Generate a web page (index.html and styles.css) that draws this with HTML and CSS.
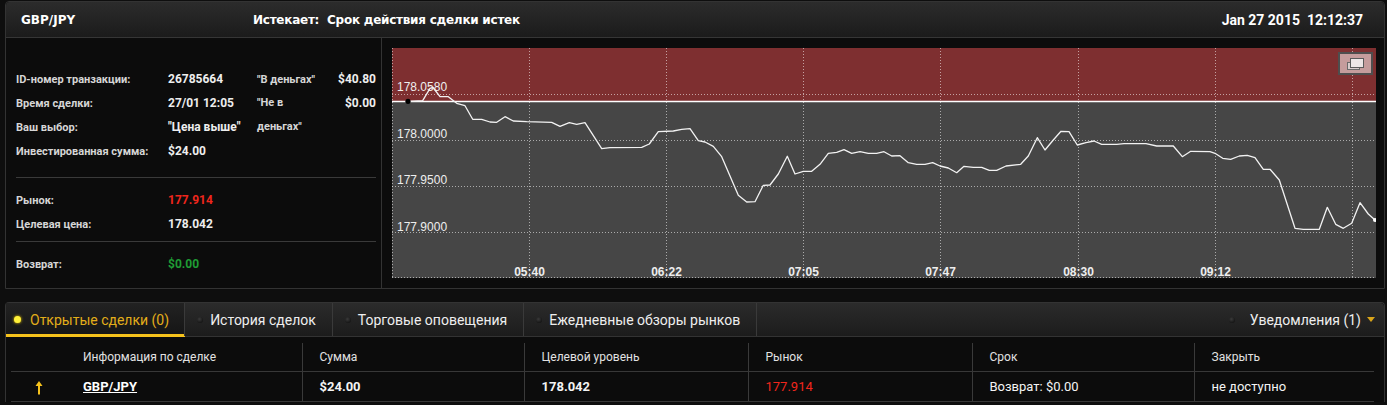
FILE: index.html
```html
<!DOCTYPE html>
<html>
<head>
  <title>GBP/JPY</title>
  <link rel="stylesheet" href="styles.css">
</head>
<body>
  <section class="deal">
    <header class="deal-head">
      <span class="deal-pair">GBP/JPY</span>
      <span class="deal-expiry">Истекает:&nbsp; Срок действия сделки истек</span>
      <span class="deal-date">Jan 27 2015&nbsp; 12:12:37</span>
    </header>
    <div class="deal-body">
      <div class="info">
        <div class="info-grid">
          <span class="label">ID-номер транзакции:</span>
          <span class="value">26785664</span>
          <span class="note">"В деньгах"</span>
          <span class="sum">$40.80</span>

          <span class="label">Время сделки:</span>
          <span class="value">27/01 12:05</span>
          <span class="note note-wrap">"Не в деньгах"</span>
          <span class="sum">$0.00</span>

          <span class="label">Ваш выбор:</span>
          <span class="value">"Цена выше"</span>
          <span></span>

          <span class="label">Инвестированная сумма:</span>
          <span class="value">$24.00</span>
        </div>
        <div class="info-grid info-split">
          <span class="label">Рынок:</span>
          <span class="value red">177.914</span>
          <span class="label">Целевая цена:</span>
          <span class="value">178.042</span>
        </div>
        <div class="info-grid info-split">
          <span class="label">Возврат:</span>
          <span class="value green">$0.00</span>
        </div>
      </div>
      <div class="chart-wrap">
        <svg class="chart" width="984" height="230" viewBox="0 0 984 230">
          <rect x="0" y="0" width="984" height="53" fill="#7e2f30"/>
          <rect x="0" y="53" width="984" height="177" fill="#464646"/>
          <g stroke="rgba(255,255,255,0.55)" stroke-width="1" stroke-dasharray="1 2">
            <line x1="0" y1="46.5" x2="984" y2="46.5"/>
            <line x1="0" y1="92.5" x2="984" y2="92.5"/>
            <line x1="0" y1="138.5" x2="984" y2="138.5"/>
            <line x1="0" y1="184.5" x2="984" y2="184.5"/>
            <line x1="0" y1="229.5" x2="984" y2="229.5"/>
            <line x1="0.5" y1="0" x2="0.5" y2="230"/>
            <line x1="137.5" y1="0" x2="137.5" y2="230"/>
            <line x1="274.5" y1="0" x2="274.5" y2="230"/>
            <line x1="411.5" y1="0" x2="411.5" y2="230"/>
            <line x1="548.5" y1="0" x2="548.5" y2="230"/>
            <line x1="686.5" y1="0" x2="686.5" y2="230"/>
            <line x1="823.5" y1="0" x2="823.5" y2="230"/>
            <line x1="960.5" y1="0" x2="960.5" y2="230"/>
          </g>
          <g class="axis-y">
            <text x="5" y="43">178.0580</text>
            <text x="5" y="89.5">178.0000</text>
            <text x="5" y="136">177.9500</text>
            <text x="5" y="182.5">177.9000</text>
          </g>
          <line x1="0" y1="53.5" x2="984" y2="53.5" stroke="#fff" stroke-width="1.5"/>
          <polyline fill="none" stroke="#f2f2f2" stroke-width="1.3" stroke-linejoin="round"
            points="16,53.3 30.7,52.7 38,40.3 41,39.5 48,48.7 56.3,48.7 64.7,55.3 73,57.7 80.7,71.3 89.7,71.3 98,74 104.7,74.3 113,68.7 121.3,73 134.7,73.7 159.7,74.3 168,78.3 177.3,74.7 184.7,76.3 193,74.7 209.7,100.7 218,99.7 249.7,99.3 257.3,96 266.3,83.7 281.3,83 289.7,81.3 298,80.7 306.3,92.7 313,94 321.3,98.3 329.7,108.7 346.3,147.3 354.7,154 363,153.7 371.3,137.3 378,137 386.3,126 395.3,108.3 403,126 411.3,123.3 419.7,123.3 428,116.3 436.3,105.3 444.7,104.3 452,101.7 459.7,105.3 468,103.7 476.3,105.3 484.7,105.3 492,103.7 499.7,108 508,107.7 516.3,114.7 524.7,116.3 533,116.3 540.7,114.7 548,118 556.3,120 564.7,124.7 572,118.3 581.3,119.3 589.7,119.3 597.3,122.3 604.7,122.3 614,118 628.7,116.3 636.3,108 645.3,89.7 653,102 661.3,92 669,83.3 677,83.7 685.3,97 694,94.7 702,93 709.7,96.3 724.7,96.3 732,95.7 754,95.7 764.7,98 781.3,98 790.3,108.7 798.7,103.3 818,103.7 823,105.3 830.7,110.3 838.7,111.3 847.3,108 855.3,107.3 863,109.7 871.3,121.3 878,121.3 887.3,132 903,180.3 911.3,181.3 927.3,181.3 935.3,159.3 943.7,176.3 951.3,180.3 959.7,175.3 968,154.7 976.3,166 983,172"/>
          <circle cx="16" cy="53.3" r="2.6" fill="#000"/>
          <circle cx="983" cy="172" r="2" fill="#fff"/>
          <g class="axis-x">
            <text x="137.5" y="228">05:40</text>
            <text x="274.5" y="228">06:22</text>
            <text x="411.5" y="228">07:05</text>
            <text x="548.5" y="228">07:47</text>
            <text x="686.5" y="228">08:30</text>
            <text x="823.5" y="228">09:12</text>
          </g>
          <g class="popout">
            <rect x="947" y="5" width="33" height="21" fill="#c59c9c" stroke="#4e4e4e" stroke-width="2"/>
            <rect x="955.5" y="14.5" width="12" height="7" fill="#d8cccc" stroke="#6a6a6a" stroke-width="1"/>
            <rect x="958.5" y="10.5" width="13" height="9" fill="#ece6e6" stroke="#5a5a5a" stroke-width="1"/>
          </g>
        </svg>
      </div>
    </div>
  </section>

  <section class="trades">
    <nav class="tabs">
      <a class="tab active"><i class="dot"></i>Открытые сделки (0)</a>
      <a class="tab"><i class="dot"></i>История сделок</a>
      <a class="tab"><i class="dot"></i>Торговые оповещения</a>
      <a class="tab"><i class="dot"></i>Ежедневные обзоры рынков</a>
      <a class="alerts"><i class="dot"></i>Уведомления (1)<span class="caret"></span></a>
    </nav>
    <table class="trade-table">
      <colgroup>
        <col style="width:55px">
        <col style="width:236px">
        <col style="width:222px">
        <col style="width:224px">
        <col style="width:224px">
        <col style="width:222px">
        <col>
      </colgroup>
      <thead>
        <tr>
          <th class="dir"></th>
          <th class="first">Информация по сделке</th>
          <th>Сумма</th>
          <th>Целевой уровень</th>
          <th>Рынок</th>
          <th>Срок</th>
          <th>Закрыть</th>
        </tr>
      </thead>
      <tbody>
        <tr>
          <td class="dir">
            <svg width="8" height="15" viewBox="0 0 8 15">
              <path d="M4 1 L7.5 6 L5 6 L5 14.5 L3 14.5 L3 6 L0.5 6 Z" fill="#f6c21c"/>
            </svg>
          </td>
          <td class="first"><a class="pair-link">GBP/JPY</a></td>
          <td class="strong">$24.00</td>
          <td class="strong">178.042</td>
          <td class="red">177.914</td>
          <td>Возврат: $0.00</td>
          <td>не доступно</td>
        </tr>
      </tbody>
    </table>
  </section>
</body>
</html>
```

FILE: styles.css
```css
body {
  margin: 0;
  padding: 0;
  background-color: #0e0e0e;
  font-family: Roboto, "Liberation Sans", sans-serif;
  color: #eee;
}
.deal {
  width: 1380px;
  margin: 1px 0 0 5px;
  border: 1px solid #333;
  border-radius: 4px 4px 0 0;
  background-color: #0c0c0c;
  box-sizing: border-box;
}
.deal-head {
  display: flex;
  align-items: center;
  height: 35px;
  padding: 0 21px 0 15px;
  border-bottom: 1px solid #363636;
  border-radius: 4px 4px 0 0;
  background: linear-gradient(#2c2c2c, #1b1b1b);
  font-weight: bold;
  color: #fff;
}
.deal-pair,
.deal-expiry {
  font-family: "DejaVu Sans", sans-serif;
  font-size: 12px;
}
.deal-pair {
  width: 232px;
}
.deal-expiry {
  letter-spacing: -0.25px;
}
.deal-date {
  margin-left: auto;
  font-size: 14px;
}
.deal-body {
  display: flex;
  height: 250px;
}
.info {
  width: 376px;
  padding: 29px 5px 0 10px;
  border-right: 1px solid #333;
  box-sizing: border-box;
}
.info-grid {
  display: grid;
  grid-template-columns: 152px 89px 70px 1fr;
  grid-auto-rows: 24px;
  align-items: center;
  padding-bottom: 14px;
  border-bottom: 1px solid #3a3a3a;
}
.info-split {
  grid-template-columns: 152px 1fr;
  padding: 10px 0 5px;
}
.info-split:last-child {
  border-bottom: none;
}
.label {
  font-size: 11px;
  font-weight: bold;
  color: #d6d6d6;
}
.value {
  font-size: 12px;
  font-weight: bold;
  color: #eee;
}
.note {
  font-size: 11px;
  font-weight: bold;
  color: #d6d6d6;
}
.note-wrap {
  grid-row: span 2;
  align-self: stretch;
  line-height: 24px;
}
.sum {
  justify-self: end;
  font-size: 12px;
  font-weight: bold;
  color: #eee;
}
.red {
  color: #f0261c;
}
.green {
  color: #1f9b34;
}
.chart-wrap {
  padding: 10px 8px 10px 10px;
}
.chart {
  display: block;
}
.axis-y text {
  font-family: "Liberation Sans", sans-serif;
  font-size: 12px;
  fill: #eee;
}
.axis-x text {
  font-family: "Liberation Sans", sans-serif;
  font-size: 12px;
  font-weight: bold;
  fill: #eee;
  text-anchor: middle;
}
.trades {
  width: 1380px;
  margin: 13px 0 0 5px;
  border: 1px solid #333;
  border-bottom: none;
  border-radius: 4px 4px 0 0;
  background-color: #0c0c0c;
  box-sizing: border-box;
}
.tabs {
  display: flex;
  align-items: stretch;
  height: 34px;
  border-bottom: 1px solid #333;
  border-radius: 4px 4px 0 0;
  background: linear-gradient(#2b2b2b, #1c1c1c);
  box-sizing: border-box;
}
.tab {
  display: flex;
  align-items: center;
  padding: 0 16px 0 12px;
  border-right: 1px solid #3a3a3a;
  font-size: 14px;
  color: #eee;
}
.tab.active {
  padding: 0 15px 0 8px;
  color: #e3ae1a;
  background: linear-gradient(#222, #151515);
  box-shadow: inset 0 -2px 0 #f6c21c, 0 1px 0 #f6c21c;
}
.dot {
  width: 6px;
  height: 6px;
  margin-right: 7px;
  border-radius: 50%;
  background: radial-gradient(circle at 40% 35%, #3a3a3a, #080808);
}
.tab.active .dot {
  width: 7px;
  height: 7px;
  margin-right: 9px;
  background: #fff13a;
  box-shadow: 0 0 3px #ffd400;
}
.alerts {
  display: flex;
  align-items: center;
  margin-left: auto;
  padding-right: 9px;
  font-size: 14px;
  color: #eee;
}
.alerts .dot {
  margin-right: 15px;
}
.caret {
  width: 0;
  height: 0;
  margin-left: 6px;
  border-top: 5px solid #d9a51a;
  border-left: 4px solid transparent;
  border-right: 4px solid transparent;
}
.trade-table {
  width: 1363px;
  margin: 6px 10px 0 5px;
  border-collapse: collapse;
  table-layout: fixed;
  font-size: 13px;
}
.trade-table th {
  height: 28px;
  padding: 0 17px;
  border-left: 1px solid #3a3a3a;
  border-bottom: 1px solid #383838;
  text-align: left;
  font-size: 12px;
  font-weight: normal;
  color: #e2e2e2;
}
.trade-table td {
  height: 29px;
  padding: 0 17px;
  border-left: 1px solid #3a3a3a;
  border-bottom: 1px solid #383838;
  color: #f4f4f4;
}
.trade-table .dir,
.trade-table .first {
  border-left: none;
}
.trade-table .dir {
  padding: 0;
  text-align: center;
}
.dir svg {
  display: inline-block;
  vertical-align: middle;
}
.trade-table .strong {
  font-weight: bold;
}
.trade-table .red {
  color: #f0261c;
}
.pair-link {
  color: #fff;
  font-weight: bold;
  text-decoration: underline;
}
```
